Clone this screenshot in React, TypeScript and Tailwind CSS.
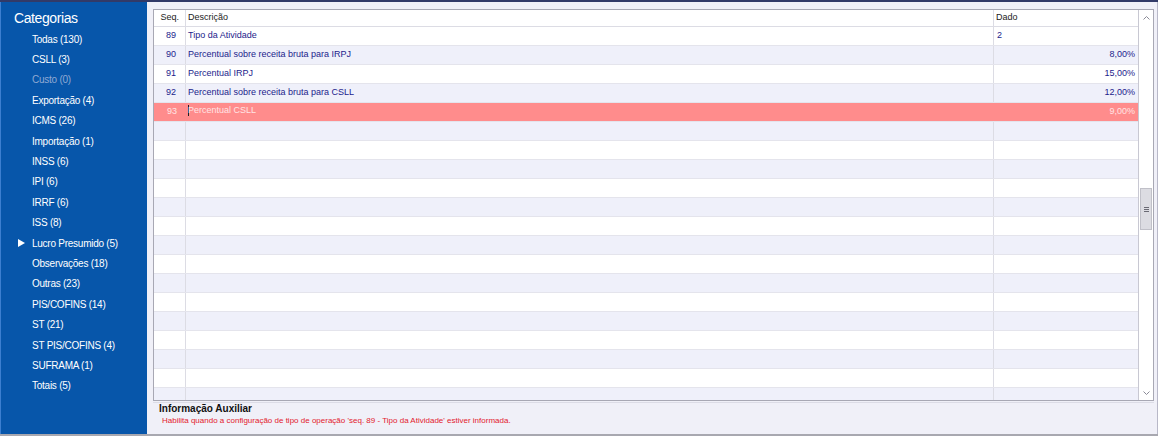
import React from "react";

const cats: { label: string; muted?: boolean; active?: boolean }[] = [
  { label: "Todas (130)" },
  { label: "CSLL (3)" },
  { label: "Custo (0)", muted: true },
  { label: "Exportação (4)" },
  { label: "ICMS (26)" },
  { label: "Importação (1)" },
  { label: "INSS (6)" },
  { label: "IPI (6)" },
  { label: "IRRF (6)" },
  { label: "ISS (8)" },
  { label: "Lucro Presumido (5)", active: true },
  { label: "Observações (18)" },
  { label: "Outras (23)" },
  { label: "PIS/COFINS (14)" },
  { label: "ST (21)" },
  { label: "ST PIS/COFINS (4)" },
  { label: "SUFRAMA (1)" },
  { label: "Totais (5)" },
];

const rows: { seq: string; desc: string; dado: string; left?: boolean; sel?: boolean }[] = [
  { seq: "89", desc: "Tipo da Atividade", dado: "2", left: true },
  { seq: "90", desc: "Percentual sobre receita bruta para IRPJ", dado: "8,00%" },
  { seq: "91", desc: "Percentual IRPJ", dado: "15,00%" },
  { seq: "92", desc: "Percentual sobre receita bruta para CSLL", dado: "12,00%" },
  { seq: "93", desc: "Percentual CSLL", dado: "9,00%", sel: true },
];

export default function App() {
  const empty = Array.from({ length: 16 });
  return (
    <div
      className="w-[1158px] h-[436px] flex flex-col overflow-hidden bg-[#f0f0f8] border-t-2 border-[#323a68]"
      style={{ fontFamily: '"Liberation Sans", Arial, sans-serif' }}
    >
      <div className="flex flex-1 min-h-0">
        {/* Sidebar */}
        <div className="w-[147px] shrink-0 bg-[#0756aa] border-l border-[#3c7fd0] flex flex-col">
          <div className="pl-[13px] pt-[7px] h-[27px] text-[14px] leading-[18px] tracking-[-0.4px] text-white">Categorias</div>
          <div className="flex flex-col">
            {cats.map((c) => (
              <div key={c.label} className="relative h-[20.4px] flex items-center pl-[31px]">
                {c.active && (
                  <svg className="absolute left-[17px] top-[6px]" width="8" height="8" viewBox="0 0 8 8">
                    <path d="M0 0 L7 4 L0 8 Z" fill="#ffffff" />
                  </svg>
                )}
                <span className={`text-[10px] tracking-[-0.25px] ${c.muted ? "text-[#8fa9d3]" : "text-white"}`}>{c.label}</span>
              </div>
            ))}
          </div>
        </div>

        {/* Main */}
        <div className="flex-1 flex flex-col pl-[6px] pr-[3px] pt-[7px] border-r border-[#b8b8c8]">
          {/* Grid */}
          <div className="h-[392px] shrink-0 border border-[#a8a8b4] bg-white flex overflow-hidden">
            <div className="flex-1 flex flex-col min-w-0" style={{ fontSize: "9px" }}>
              {/* Header */}
              <div className="h-[17px] shrink-0 flex border-b border-[#dcdce4] text-[#222]">
                <div className="w-[32px] shrink-0 border-r border-[#dcdce4] flex items-center justify-end pr-[6px]">Seq.</div>
                <div className="w-[808px] shrink-0 border-r border-[#dcdce4] flex items-center pl-[2px]">Descrição</div>
                <div className="flex-1 flex items-center pl-[2px]">Dado</div>
              </div>
              {rows.map((r, i) => (
                <div
                  key={r.seq}
                  className={`h-[19px] shrink-0 flex border-b border-[#e4e4ec] ${
                    r.sel ? "bg-[#ff8c8c] text-[#ffe4e4]" : i % 2 === 1 ? "bg-[#eff0fa] text-[#1c1c8c]" : "bg-white text-[#1c1c8c]"
                  }`}
                >
                  <div className={`w-[32px] shrink-0 flex items-center justify-end pr-[9px] ${r.sel ? "" : "border-r border-[#dcdce4]"}`}>
                    {r.seq}
                  </div>
                  <div className={`w-[808px] shrink-0 flex pl-[2px] ${r.sel ? "items-start pt-[1px]" : "items-center border-r border-[#dcdce4]"}`}>
                    {r.sel && <span className="w-px h-[11px] bg-[#222] mt-[1px] mr-[-1px]" />}
                    {r.desc}
                  </div>
                  <div className={`flex-1 flex items-center ${r.left ? "pl-[3px]" : "justify-end pr-[3px]"}`}>{r.dado}</div>
                </div>
              ))}
              {empty.map((_, i) => (
                <div
                  key={i}
                  className={`h-[19px] shrink-0 flex border-b border-[#e4e4ec] ${i % 2 === 0 ? "bg-[#eff0fa]" : "bg-white"}`}
                >
                  <div className="w-[32px] shrink-0 border-r border-[#dcdce4]" />
                  <div className="w-[808px] shrink-0 border-r border-[#dcdce4]" />
                  <div className="flex-1" />
                </div>
              ))}
            </div>
            {/* Scrollbar */}
            <div className="w-[15px] shrink-0 border-l border-[#c8c8d2] bg-white flex flex-col">
              <div className="h-[15px] flex items-center justify-center">
                <svg width="7" height="4" viewBox="0 0 7 4">
                  <path d="M0.5 3.5 L3.5 0.5 L6.5 3.5" stroke="#8a8a96" strokeWidth="1" fill="none" />
                </svg>
              </div>
              <div className="h-[163px]" />
              <div className="h-[42px] mx-[1px] bg-[#dcdce2] border border-[#c0c0c8] flex flex-col items-center justify-center gap-[1px]">
                <span className="w-[5px] h-px bg-[#6a6a74]" />
                <span className="w-[5px] h-px bg-[#6a6a74]" />
                <span className="w-[5px] h-px bg-[#6a6a74]" />
              </div>
              <div className="flex-1" />
              <div className="h-[15px] flex items-center justify-center">
                <svg width="7" height="4" viewBox="0 0 7 4">
                  <path d="M0.5 0.5 L3.5 3.5 L6.5 0.5" stroke="#8a8a96" strokeWidth="1" fill="none" />
                </svg>
              </div>
            </div>
          </div>

          {/* Bottom info */}
          <div className="flex-1 mt-[1px] border-t border-[#dcdce6] pl-[6px]">
            <div className="text-[10px] font-bold text-[#111] leading-[12px]">Informação Auxiliar</div>
            <div className="text-[8px] text-[#e3202c] leading-[11px] pl-[3px]">
              Habilita quando a configuração de tipo de operação 'seq. 89 - Tipo da Atividade' estiver informada.
            </div>
          </div>
        </div>
      </div>
      <div className="h-[2px] bg-[#a8a8b0]" />
    </div>
  );
}
